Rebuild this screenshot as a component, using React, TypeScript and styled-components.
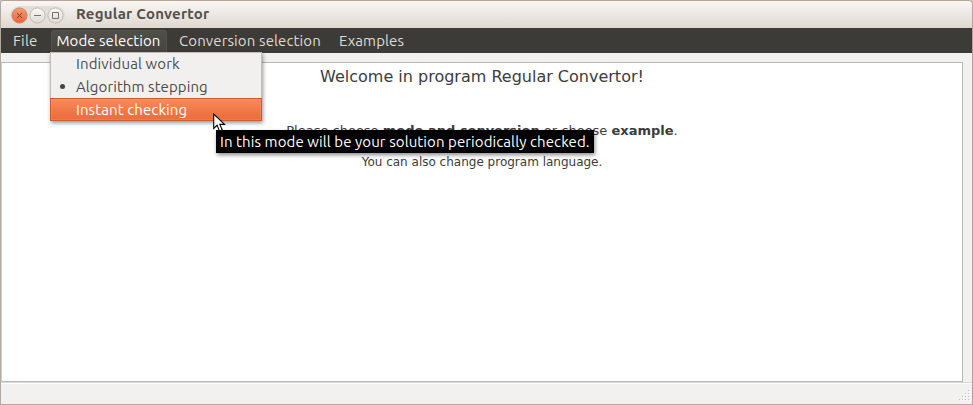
import React from "react";
import styled, { createGlobalStyle } from "styled-components";

const GlobalStyle = createGlobalStyle`
  *, *::before, *::after { box-sizing: border-box; }
  body { margin: 0; background: #c9c5c1; overflow: hidden; }
`;

const Window = styled.div`
  position: relative;
  display: flex;
  flex-direction: column;
  width: 973px;
  height: 405px;
  border: 1px solid #b0a9a2;
  border-top-color: #b7a497;
  border-right-color: #aba5a0;
  border-radius: 4px 5px 0 0;
  background: #f2f1f0;
  overflow: hidden;
  font-family: Ubuntu, "Noto Sans", sans-serif;
  font-size: 15px;
  color: #4c4c4c;
`;

const TitleBar = styled.header`
  display: flex;
  align-items: center;
  flex: 0 0 27px;
  padding-left: 9px;
  background: linear-gradient(#f8f6f4, #f0ece8 35%, #dfd8d0);
`;

const Controls = styled.svg`
  display: block;
  width: 56px;
  height: 20px;
`;

const Title = styled.h1`
  margin: 0 0 1px 10px;
  font-size: 15px;
  line-height: 20px;
  font-weight: 700;
  letter-spacing: 0.23px;
  white-space: nowrap;
  color: #574f4a;
`;

const MenuBar = styled.nav`
  display: flex;
  align-items: flex-end;
  flex: 0 0 25px;
  padding-left: 4px;
  background: #3c3b37;
`;

const MenuButton = styled.div<{ $width: number; $open?: boolean; $spacing?: number }>`
  width: ${(p) => p.$width}px;
  height: 23px;
  margin-right: ${(p) => (p.$open ? 4 : 0)}px;
  padding-left: ${(p) => (p.$open ? 4.5 : 8)}px;
  border: 1px solid ${(p) => (p.$open ? "#53524c" : "transparent")};
  border-bottom: 0;
  border-left-width: ${(p) => (p.$open ? 1 : 0)}px;
  border-radius: 3px 3px 0 0;
  line-height: 20px;
  letter-spacing: ${(p) => p.$spacing ?? 0}px;
  white-space: nowrap;
  color: ${(p) => (p.$open ? "#fff" : "#dfdbd2")};
  background: ${(p) => (p.$open ? "linear-gradient(#4f4e49, #45443f)" : "none")};
`;

const Content = styled.main`
  flex: 0 0 320px;
  width: 962px;
  margin-top: 9px;
  border: 1px solid #bcb9b3;
  border-left: 1px solid #d6d3cf;
  background: #fff;
  text-align: center;
  font-family: "DejaVu Sans", sans-serif;
  color: #3c3c3c;
`;

const Heading = styled.h2`
  margin: 4px 0 0;
  font-size: 16px;
  line-height: 19px;
  font-weight: 400;
`;

const Line = styled.p<{ $top: number; $size: number }>`
  margin: ${(p) => p.$top}px 0 0;
  font-size: ${(p) => p.$size}px;
  line-height: 15px;
`;

const StatusBar = styled.footer`
  display: flex;
  flex: 1;
  align-items: flex-end;
  justify-content: flex-end;
  border-top: 1px solid #dddad6;
  box-shadow: inset 0 1px #fff;
  padding: 0 1px 2px 0;
`;

const Menu = styled.div`
  position: absolute;
  left: 49px;
  top: 51px;
  width: 212px;
  height: 69px;
  background: #f1f0ef;
  border: 1px solid #c1bdb9;
  border-bottom: 0;
  box-shadow: 1px 2px 4px rgba(0, 0, 0, 0.42);
`;

const MenuList = styled.div`
  margin-top: -1px;
`;

const MenuItem = styled.div<{ $active?: boolean; $spacing?: number }>`
  position: relative;
  height: 23px;
  margin: 0 -1px;
  padding-left: 25px;
  border: 1px solid ${(p) => (p.$active ? "#cb5b30" : "transparent")};
  line-height: 21px;
  letter-spacing: ${(p) => p.$spacing ?? 0}px;
  white-space: nowrap;
  color: ${(p) => (p.$active ? "#fff" : "#4c4c4c")};
  background: ${(p) => (p.$active ? "linear-gradient(#f98a5c, #ee7443 70%, #ec6d3b)" : "none")};
  box-shadow: ${(p) => (p.$active ? "inset 0 0 0 1px rgba(255,150,105,.35)" : "none")};
`;

const Bullet = styled.span`
  position: absolute;
  left: 9px;
  top: 8px;
  width: 5px;
  height: 5px;
  border-radius: 50%;
  background: #444;
`;

const Tooltip = styled.div`
  position: absolute;
  left: 215px;
  top: 129px;
  width: 378px;
  height: 23px;
  padding-left: 4px;
  background: #000;
  color: #fff;
  line-height: 23px;
  letter-spacing: 0.09px;
  white-space: nowrap;
  box-shadow: 1px 2px 4px rgba(0, 0, 0, 0.45);
`;

const Pointer = styled.svg`
  position: absolute;
  left: 212px;
  top: 112px;
  width: 13px;
  height: 20px;
`;

const gripDots = [[9, 0], [6, 3], [9, 3], [3, 6], [6, 6], [9, 6], [0, 9], [3, 9], [6, 9], [9, 9]];

function WindowControls() {
  return (
    <Controls viewBox="0 0 56 20">
      <defs>
        <linearGradient id="close" x1="0" y1="0" x2="0" y2="1">
          <stop offset="0" stopColor="#f69a76" />
          <stop offset="1" stopColor="#ec6239" />
        </linearGradient>
        <linearGradient id="plain" x1="0" y1="0" x2="0" y2="1">
          <stop offset="0" stopColor="#faf9f7" />
          <stop offset="1" stopColor="#dedad4" />
        </linearGradient>
      </defs>
      <rect x="0.5" y="1" width="54.5" height="18" rx="9" fill="#e3ded8" />
      <circle cx="9.5" cy="10.5" r="7.6" fill="url(#close)" stroke="#cf8468" />
      <circle cx="27.5" cy="10.5" r="7.6" fill="url(#plain)" stroke="#c0b9b1" />
      <circle cx="45.5" cy="10.5" r="7.6" fill="url(#plain)" stroke="#c0b9b1" />
      <path d="M7 8l5 5M12 8l-5 5" stroke="#7a3f2c" />
      <path d="M24 10.5h7" stroke="#77716b" />
      <path d="M42.5 7.5h6v6h-6z" fill="none" stroke="#77716b" />
    </Controls>
  );
}

export default function App() {
  return (
    <>
      <GlobalStyle />
      <Window>
        <TitleBar>
          <WindowControls />
          <Title>Regular Convertor</Title>
        </TitleBar>
        <MenuBar>
          <MenuButton $width={46} $spacing={0.2}>File</MenuButton>
          <MenuButton $width={116} $spacing={0.05} $open>Mode selection</MenuButton>
          <MenuButton $width={160} $spacing={0.12}>Conversion selection</MenuButton>
          <MenuButton $width={90} $spacing={0.1}>Examples</MenuButton>
        </MenuBar>
        <Content>
          <Heading>Welcome in program Regular Convertor!</Heading>
          <Line $top={37} $size={13}>
            Please choose <b>mode and conversion</b> or choose <b>example</b>.
          </Line>
          <Line $top={17} $size={12}>You can also change program language.</Line>
        </Content>
        <StatusBar>
          <svg width="12" height="12" viewBox="0 0 12 12">
            {gripDots.map(([x, y]) => (
              <g key={`${x}-${y}`}>
                <rect x={x + 1} y={y + 1} width="1" height="1" fill="#fff" />
                <rect x={x} y={y} width="1" height="1" fill="#c4c0bb" />
              </g>
            ))}
          </svg>
        </StatusBar>
        <Menu>
          <MenuList>
            <MenuItem $spacing={0.13}>Individual work</MenuItem>
            <MenuItem $spacing={0.08}><Bullet />Algorithm stepping</MenuItem>
            <MenuItem $spacing={0.1} $active>Instant checking</MenuItem>
          </MenuList>
        </Menu>
        <Tooltip>In this mode will be your solution periodically checked.</Tooltip>
        <Pointer viewBox="0 0 13 20">
          <path d="M.7 1v14.5l3.4-3.2 2.4 5.8 2.8-1.2-2.5-5.5h4.8z" fill="#fff" stroke="#000" strokeWidth="1.1" />
        </Pointer>
      </Window>
    </>
  );
}
